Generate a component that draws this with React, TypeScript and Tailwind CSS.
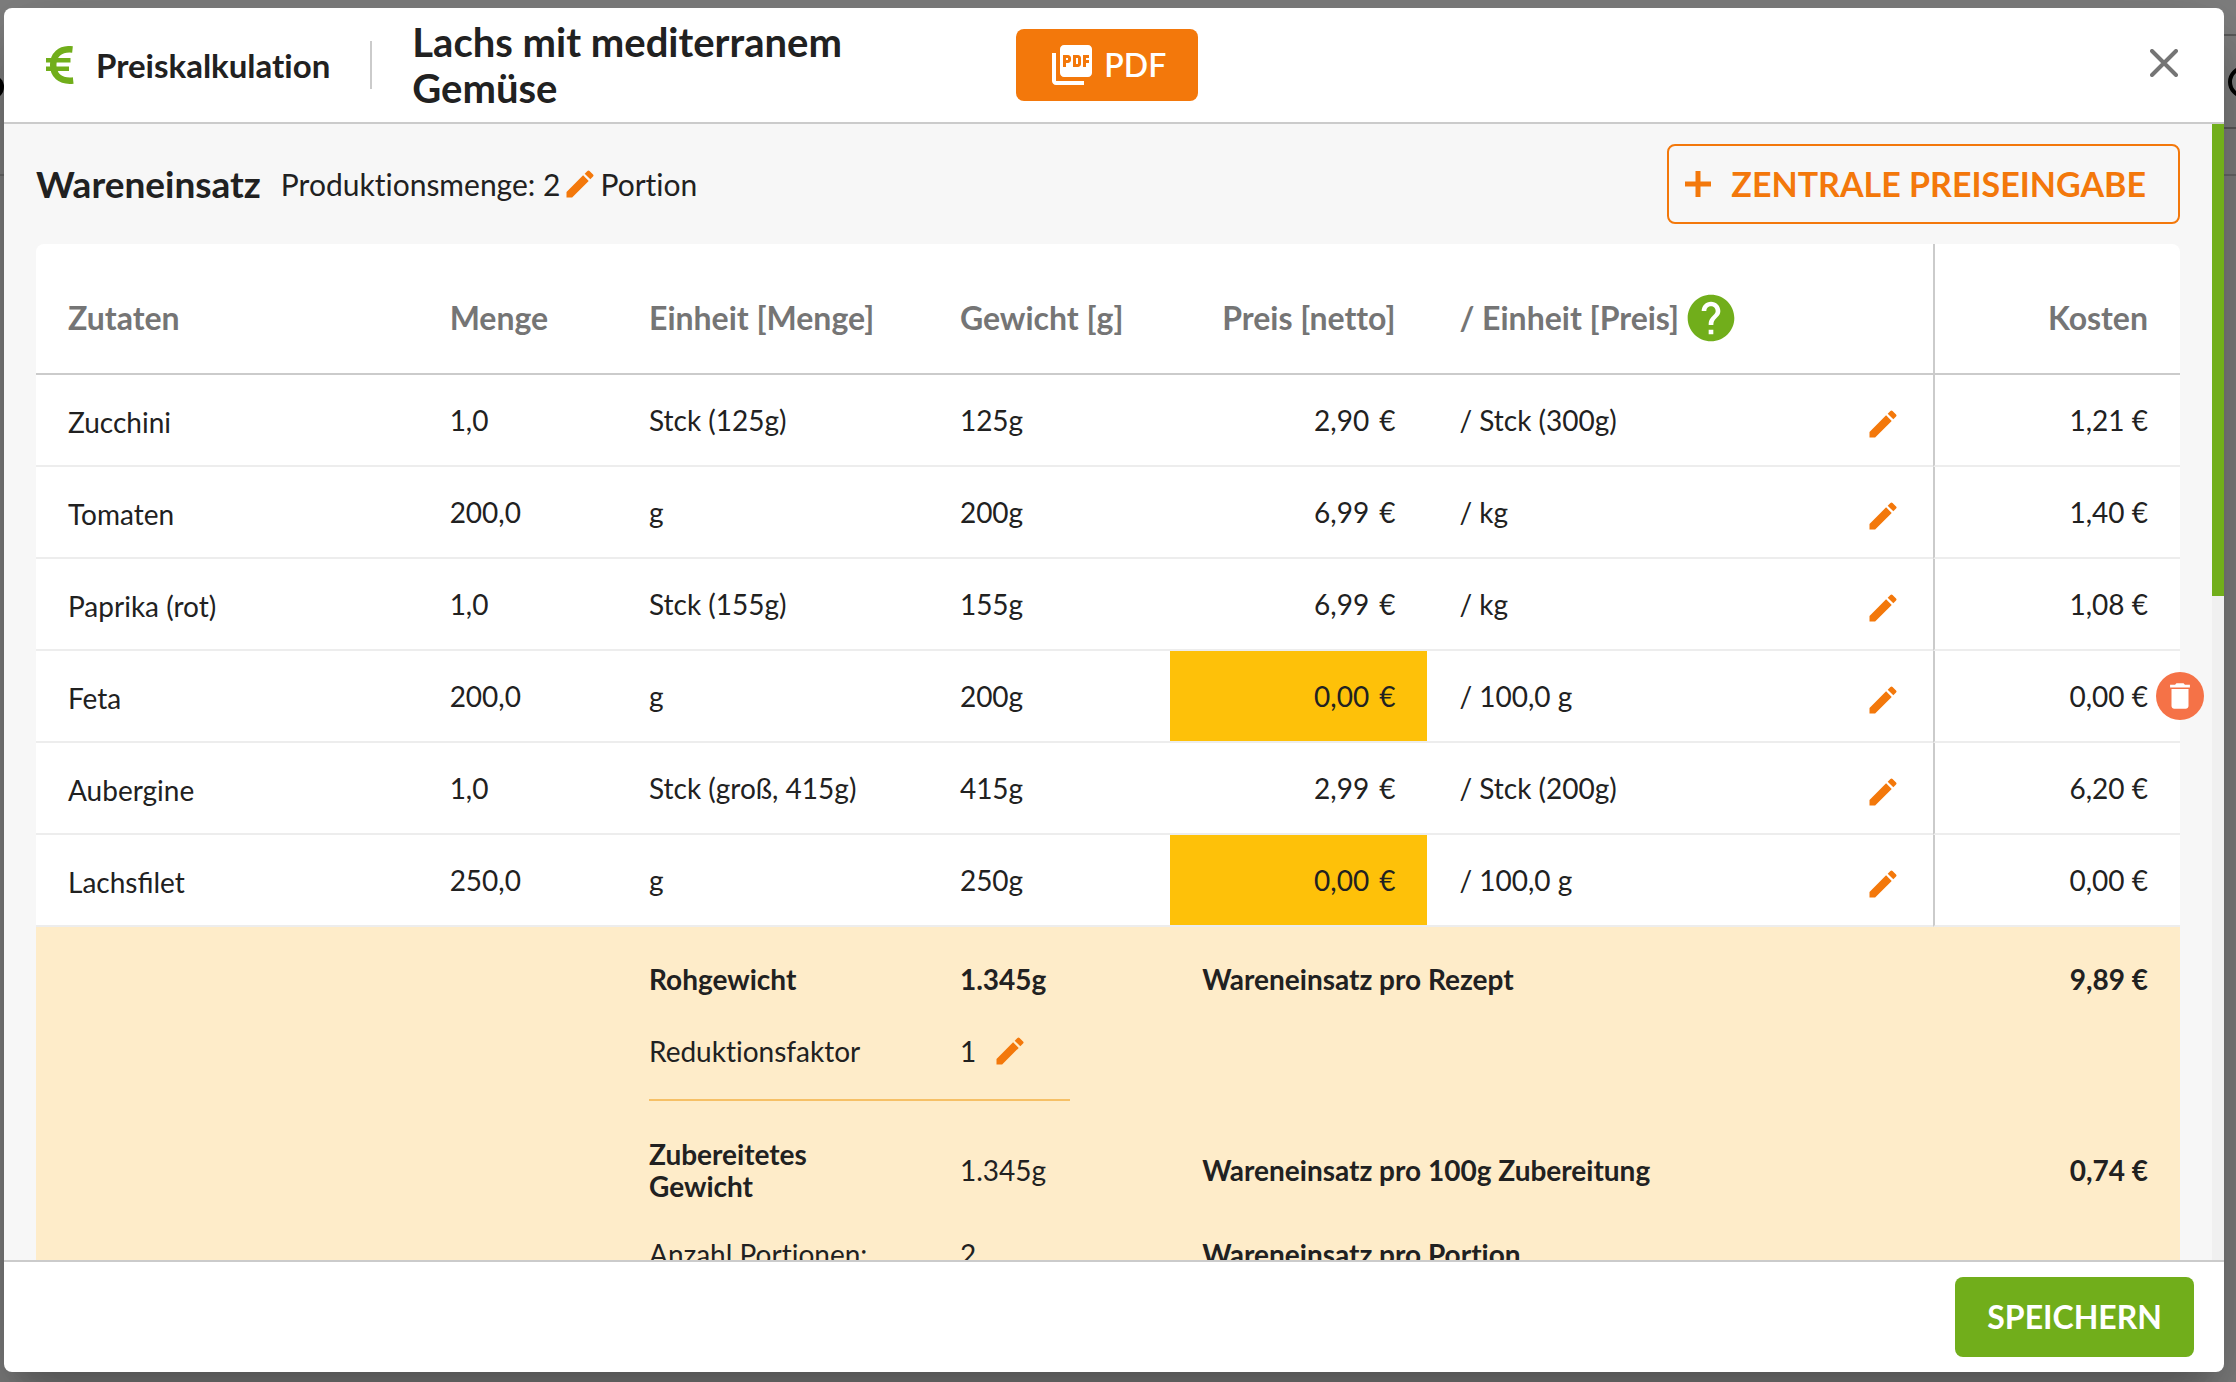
import type { ReactNode } from "react";
import { MdDelete, MdEdit, MdHelp, MdPictureAsPdf } from "react-icons/md";

type Ingredient = {
  name: string;
  amount: string;
  unit: string;
  weight: string;
  price: string;
  priceUnit: string;
  cost: string;
  missing?: boolean;
  removable?: boolean;
};

const ingredients: Ingredient[] = [
  { name: "Zucchini", amount: "1,0", unit: "Stck (125g)", weight: "125g", price: "2,90", priceUnit: "Stck (300g)", cost: "1,21" },
  { name: "Tomaten", amount: "200,0", unit: "g", weight: "200g", price: "6,99", priceUnit: "kg", cost: "1,40" },
  { name: "Paprika (rot)", amount: "1,0", unit: "Stck (155g)", weight: "155g", price: "6,99", priceUnit: "kg", cost: "1,08" },
  { name: "Feta", amount: "200,0", unit: "g", weight: "200g", price: "0,00", priceUnit: "100,0 g", cost: "0,00", missing: true, removable: true },
  { name: "Aubergine", amount: "1,0", unit: "Stck (groß, 415g)", weight: "415g", price: "2,99", priceUnit: "Stck (200g)", cost: "6,20" },
  { name: "Lachsfilet", amount: "250,0", unit: "g", weight: "250g", price: "0,00", priceUnit: "100,0 g", cost: "0,00", missing: true },
];

function EuroIcon() {
  return (
    <svg viewBox="0 0 28 38" className="h-[38px] w-7 text-[#71ae1b]" fill="none" stroke="currentColor" aria-hidden="true">
      <path d="M26.5 3.4C13.5 2 7.2 9.500 7.200 19s6.300 17 20 15.500" strokeWidth="6.500" />
      <path d="M0 14.200h24.500M0 22.800h23" strokeWidth="4.400" />
    </svg>
  );
}

function EditButton({ label }: { label: string }) {
  return (
    <button type="button" aria-label={label} className="block text-[#f3780b]">
      <MdEdit className="size-9" />
    </button>
  );
}

function HeadCell({ children, className = "" }: { children: ReactNode; className?: string }) {
  return (
    <th scope="col" className={`h-[131px] border-b-2 border-[#cbcbcb] px-8 pt-[18px] text-left font-bold whitespace-nowrap ${className}`}>
      {children}
    </th>
  );
}

function Cell({ children, className = "" }: { children: ReactNode; className?: string }) {
  return <td className={`h-[92px] border-b-2 border-[#ededed] px-8 ${className}`}>{children}</td>;
}

function IngredientRow({ item }: { item: Ingredient }) {
  return (
    <tr>
      <Cell className="pt-1 [font-variant-ligatures:normal]">{item.name}</Cell>
      <Cell>{item.amount}</Cell>
      <Cell>{item.unit}</Cell>
      <Cell>{item.weight}</Cell>
      <Cell className={item.missing ? "bg-[#fec109]" : ""}>
        <div className="flex justify-end gap-[10px]">
          <span>{item.price}</span>
          <span>€</span>
        </div>
      </Cell>
      <Cell>
        <div className="flex items-center justify-between">
          <span>/ {item.priceUnit}</span>
          <div className="pt-2">
            <EditButton label={`Preis von ${item.name} bearbeiten`} />
          </div>
        </div>
      </Cell>
      <Cell className="relative border-l-2 border-l-[#cbcbcb] text-right">
        {item.cost} €
        {item.removable && (
          <button
            type="button"
            aria-label={`${item.name} entfernen`}
            className="absolute top-[21px] -right-6 flex size-12 items-center justify-center rounded-full bg-[#f57247] text-white">
            <MdDelete className="size-[34px]" />
          </button>
        )}
      </Cell>
    </tr>
  );
}

/* Page behind the dialog, only its edges are visible */
function Backdrop() {
  return (
    <div className="absolute inset-0" aria-hidden="true">
      <div className="absolute top-[174px] left-0 h-0.5 w-full bg-[#6a6a6a]" />
      <div className="absolute top-[34px] right-0 h-0.5 w-4 bg-[#5c5c5c]" />
      <div className="absolute top-[127px] right-0 h-0.5 w-4 bg-[#5c5c5c]" />
      <div className="absolute top-[75px] -left-5 size-6 rounded-full bg-black" />
      <div className="absolute top-[66px] -right-6 size-8 rounded-full border-4 border-black" />
    </div>
  );
}

export default function App() {
  return (
    <div className="relative flex h-screen flex-col overflow-hidden bg-[#808080] pt-2 pr-3 pb-[10px] pl-1 font-[Lato,sans-serif] text-[28px] leading-8 text-[#212121] [font-variant-ligatures:none]">
      <Backdrop />
      <div
        role="dialog"
        aria-labelledby="dialog-title"
        className="relative flex min-h-0 flex-1 flex-col overflow-hidden rounded-lg bg-white shadow-[0_22px_30px_-14px_rgba(0,0,0,0.2),0_48px_76px_6px_rgba(0,0,0,0.14),0_18px_92px_16px_rgba(0,0,0,0.12)]">
        {/* Header */}
        <header className="flex h-[116px] flex-none items-center border-b-2 border-[#cbcbcb] pr-11 pl-[42px]">
          <EuroIcon />
          <h2 id="dialog-title" className="ml-[22px] text-[33px] font-bold">
            Preiskalkulation
          </h2>
          <div className="mx-10 h-12 w-0.5 bg-[#cbcbcb]" />
          <h1 className="w-[572px] text-[40px] leading-[46px] font-bold">Lachs mit mediterranem Gemüse</h1>
          <button type="button" className="ml-8 flex h-[72px] items-center gap-2 rounded-lg bg-[#f3780b] px-8 text-[32px] font-semibold text-white">
            <MdPictureAsPdf className="size-12" />
            PDF
          </button>
          <button type="button" aria-label="Schließen" className="mb-1 ml-auto p-0.5 text-[#757575]">
            <svg viewBox="0 0 28 28" className="size-7" fill="none" stroke="currentColor" strokeWidth="4" strokeLinecap="round">
              <path d="M2 2l24 24M26 2L2 26" />
            </svg>
          </button>
        </header>

        {/* Content */}
        <div className="flex min-h-0 flex-1 bg-[#f7f7f7]">
          <main className="min-w-0 flex-1 overflow-hidden px-8 pt-5">
            <div className="mb-5 flex items-center">
              <h3 className="text-[37px] font-bold">Wareneinsatz</h3>
              <div className="ml-5 flex items-center gap-0.5 text-[30px]">
                Produktionsmenge: 2
                <EditButton label="Produktionsmenge bearbeiten" />
                Portion
              </div>
              <button
                type="button"
                className="ml-auto flex h-20 items-center gap-5 rounded-lg border-2 border-[#f3780b] pr-8 pl-4 text-[34px] font-bold text-[#f3780b]">
                <svg viewBox="0 0 26 26" className="size-[26px]" fill="none" stroke="currentColor" strokeWidth="5" aria-hidden="true">
                  <path d="M13 0v26M0 13h26" />
                </svg>
                ZENTRALE PREISEINGABE
              </button>
            </div>

            <table className="w-full table-fixed border-separate border-spacing-0 rounded-t-lg bg-white">
              <colgroup>
                <col className="w-[17.8%]" />
                <col className="w-[9.3%]" />
                <col className="w-[14.5%]" />
                <col className="w-[11.3%]" />
                <col className="w-[12%]" />
                <col className="w-[23.6%]" />
                <col className="w-[11.5%]" />
              </colgroup>
              <thead className="text-[32px] text-[#757575]">
                <tr>
                  <HeadCell>Zutaten</HeadCell>
                  <HeadCell>Menge</HeadCell>
                  <HeadCell>Einheit [Menge]</HeadCell>
                  <HeadCell>Gewicht [g]</HeadCell>
                  <HeadCell className="text-right">Preis [netto]</HeadCell>
                  <HeadCell>
                    <div className="flex h-8 items-center gap-1">
                      / Einheit [Preis]
                      <button type="button" aria-label="Hilfe" className="text-[#71ae1b]">
                        <MdHelp className="size-14" />
                      </button>
                    </div>
                  </HeadCell>
                  <HeadCell className="border-l-2 text-right">Kosten</HeadCell>
                </tr>
              </thead>
              <tbody>
                {ingredients.map((item) => (
                  <IngredientRow key={item.name} item={item} />
                ))}
              </tbody>
              <tfoot className="bg-[#feecc9]">
                <tr className="h-[104px] font-bold">
                  <td colSpan={2} />
                  <td className="px-8">Rohgewicht</td>
                  <td className="px-8">1.345g</td>
                  <td colSpan={2} className="px-8">Wareneinsatz pro Rezept</td>
                  <td className="px-8 text-right">9,89 €</td>
                </tr>
                <tr className="h-10">
                  <td colSpan={2} />
                  <td className="px-8">Reduktionsfaktor</td>
                  <td className="px-8">
                    <div className="flex items-center gap-4">
                      1
                      <EditButton label="Reduktionsfaktor bearbeiten" />
                    </div>
                  </td>
                  <td colSpan={3} />
                </tr>
                <tr className="h-[58px]">
                  <td colSpan={2} />
                  <td colSpan={2} className="pr-[100px] pl-8">
                    <hr className="border-t-2 border-[#f6c066]" />
                  </td>
                  <td colSpan={3} />
                </tr>
                <tr className="h-[82px]">
                  <td colSpan={2} />
                  <td className="px-8 font-bold">Zubereitetes Gewicht</td>
                  <td className="px-8">1.345g</td>
                  <td colSpan={2} className="px-8 font-bold">Wareneinsatz pro 100g Zubereitung</td>
                  <td className="px-8 text-right font-bold">0,74 €</td>
                </tr>
                <tr className="h-[86px]">
                  <td colSpan={2} />
                  <td className="px-8">Anzahl Portionen:</td>
                  <td className="px-8">2</td>
                  <td colSpan={3} className="px-8 font-bold">Wareneinsatz pro Portion</td>
                </tr>
              </tfoot>
            </table>
          </main>

          {/* Scrollbar */}
          <div className="w-3 flex-none bg-[#f0f0f0]">
            <div className="h-[472px] bg-[#71ae1b]" />
          </div>
        </div>

        {/* Footer */}
        <footer className="flex h-28 flex-none items-center justify-end border-t-2 border-[#cbcbcb] pr-[30px]">
          <button type="button" className="h-20 rounded-lg bg-[#71ae1b] px-8 text-[32px] font-bold text-white">
            SPEICHERN
          </button>
        </footer>
      </div>
    </div>
  );
}
